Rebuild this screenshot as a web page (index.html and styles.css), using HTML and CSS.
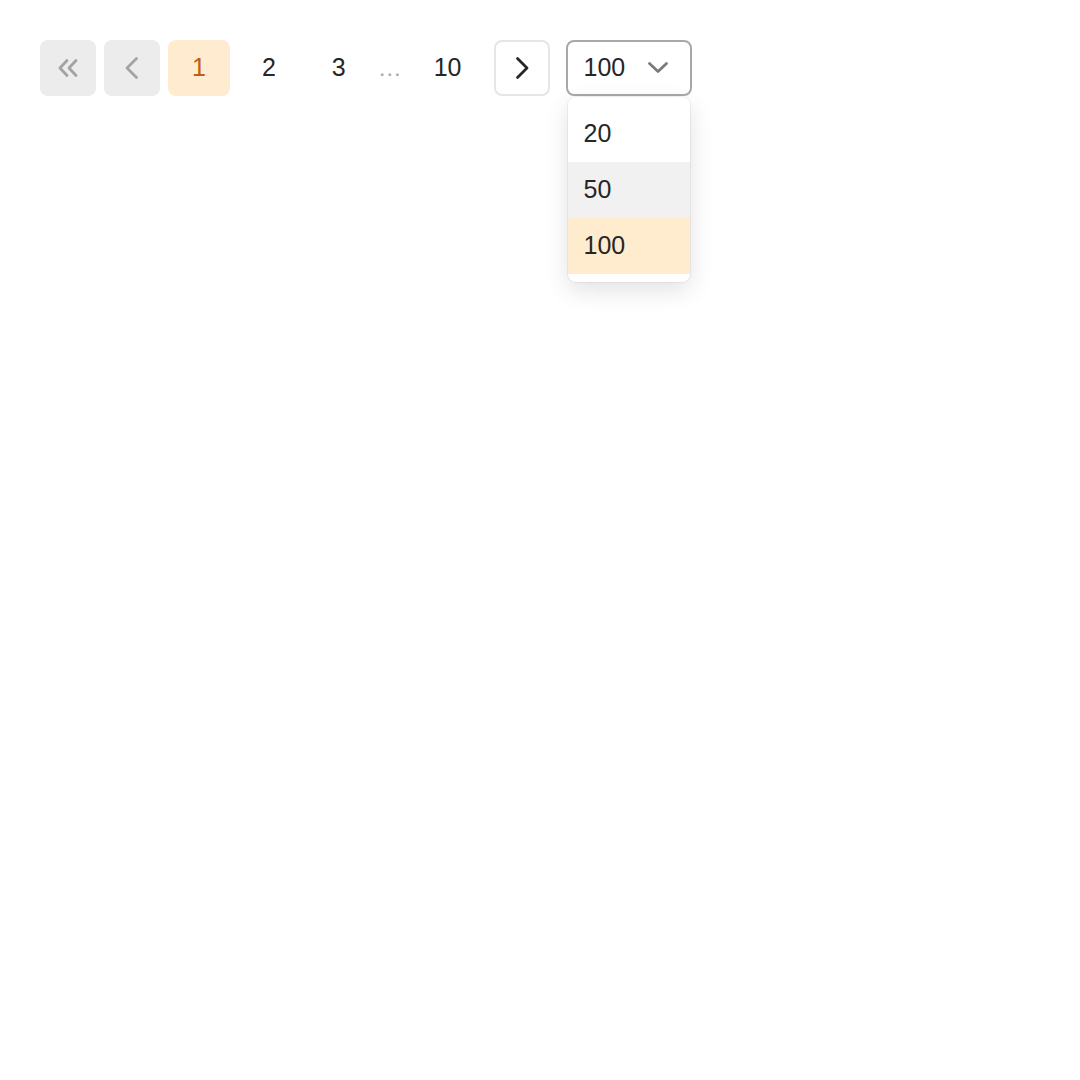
FILE: index.html
```html
<!DOCTYPE html>
<html lang="en">
<head>
<meta charset="utf-8">
<link rel="stylesheet" href="styles.css">
</head>
<body>
<nav class="pager">
  <button class="btn btn-icon btn-disabled" aria-label="First page">
    <svg width="24" height="24" viewBox="0 0 24 24" fill="none" stroke="currentColor" stroke-width="2.8" stroke-linecap="round" stroke-linejoin="round"><polyline points="11,4.5 4,12 11,19.5"/><polyline points="20,4.5 13,12 20,19.5"/></svg>
  </button>
  <button class="btn btn-icon btn-disabled" aria-label="Previous page">
    <svg width="24" height="24" viewBox="0 0 24 24" fill="none" stroke="currentColor" stroke-width="2.8" stroke-linecap="round" stroke-linejoin="round"><polyline points="16.5,2.5 7,12 16.5,21.5"/></svg>
  </button>
  <button class="btn btn-page active">1</button>
  <button class="btn btn-page">2</button>
  <button class="btn btn-page">3</button>
  <span class="ellipsis">…</span>
  <button class="btn btn-page">10</button>
  <button class="btn btn-icon btn-outline" aria-label="Next page">
    <svg width="24" height="24" viewBox="0 0 24 24" fill="none" stroke="currentColor" stroke-width="2.8" stroke-linecap="round" stroke-linejoin="round"><polyline points="7.5,2.5 17,12 7.5,21.5"/></svg>
  </button>
  <div class="select-wrap">
    <div class="select">
      <span class="select-value">100</span>
      <svg width="24" height="24" viewBox="0 0 24 24" fill="none" stroke="currentColor" stroke-width="2.8" stroke-linecap="round" stroke-linejoin="round"><polyline points="3.5,7.5 12,15.5 20.5,7.5"/></svg>
    </div>
    <ul class="menu">
      <li class="option">20</li>
      <li class="option hover">50</li>
      <li class="option selected">100</li>
    </ul>
  </div>
</nav>
</body>
</html>
```
FILE: styles.css
```css
* { box-sizing: border-box; }
html, body { height: 100%; }
body {
  margin: 0;
  min-height: 1080px;
  background: #ffffff;
  font-family: "Liberation Sans", Arial, sans-serif;
  color: #262626;
}
.pager {
  display: flex;
  align-items: center;
  gap: 8px;
  padding: 40px;
}
.btn {
  height: 56px;
  border: none;
  border-radius: 8px;
  background: transparent;
  font-family: inherit;
  font-size: 25px;
  color: #262626;
  display: flex;
  align-items: center;
  justify-content: center;
  padding: 0;
  flex: none;
}
.btn-icon { width: 56px; }
.btn-disabled { background: #ececec; color: #a3a3a3; }
.btn-outline { border: 2px solid #e6e6e6; background: #fff; color: #262626; }
.btn-page { padding: 0 24px 2px; }
.btn-page.active { background: #ffebcf; color: #c25e0e; }
.ellipsis {
  width: 24px;
  flex: none;
  font-size: 24px;
  color: #a8a8a8;
  text-align: center;
}
.select-wrap {
  position: relative;
  margin-left: 8px;
  flex: none;
}
.select {
  width: 126px;
  height: 56px;
  border: 2px solid #a8a8a8;
  border-radius: 8px;
  display: flex;
  align-items: center;
  justify-content: space-between;
  padding: 0 20px 0 16px;
  font-size: 25px;
  color: #262626;
}
.select-value { margin-bottom: 2px; }
.select svg { color: #7a7a7a; }
.menu {
  position: absolute;
  top: 57px;
  left: 2px;
  width: 122px;
  margin: 0;
  padding: 9px 0 8px;
  list-style: none;
  background: #fff;
  border-radius: 8px;
  box-shadow: 0 0 0 1px rgba(0,0,0,0.05), 0 8px 24px rgba(0,0,0,0.12);
}
.option {
  height: 56px;
  display: flex;
  align-items: center;
  padding: 0 0 2px 16px;
  font-size: 25px;
}
.option.hover { background: #f1f1f1; }
.option.selected { background: #ffebcd; }
```
